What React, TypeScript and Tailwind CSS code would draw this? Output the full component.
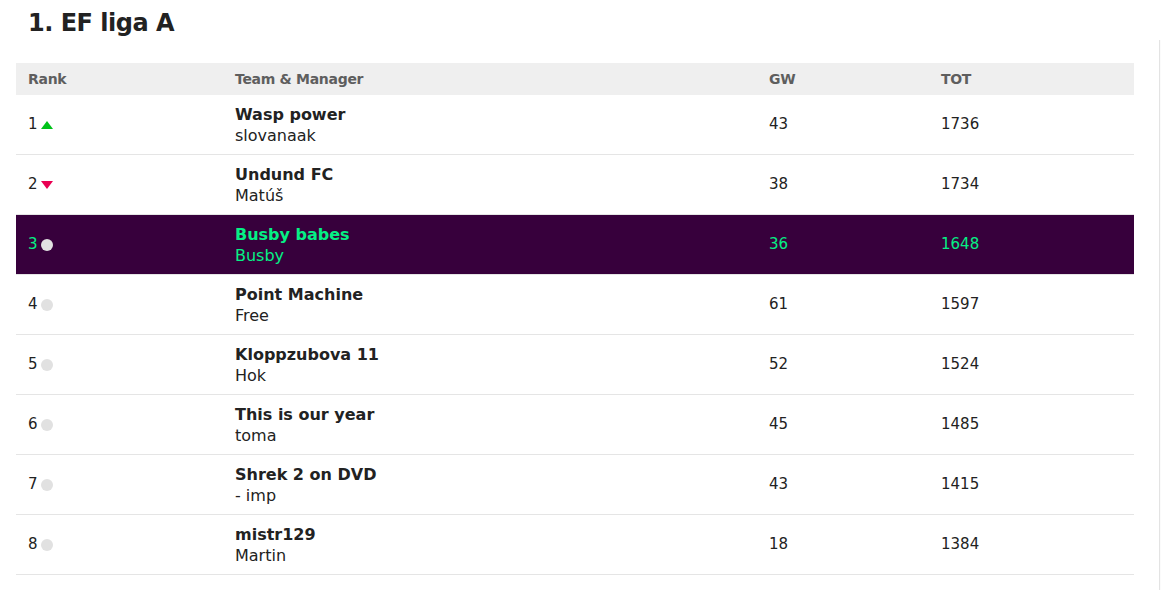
const rows = [
  { rank: 1, move: "up", team: "Wasp power", manager: "slovanaak", gw: 43, tot: 1736 },
  { rank: 2, move: "down", team: "Undund FC", manager: "Matúš", gw: 38, tot: 1734 },
  { rank: 3, move: "same", team: "Busby babes", manager: "Busby", gw: 36, tot: 1648, mine: true },
  { rank: 4, move: "same", team: "Point Machine", manager: "Free", gw: 61, tot: 1597 },
  { rank: 5, move: "same", team: "Kloppzubova 11", manager: "Hok", gw: 52, tot: 1524 },
  { rank: 6, move: "same", team: "This is our year", manager: "toma", gw: 45, tot: 1485 },
  { rank: 7, move: "same", team: "Shrek 2 on DVD", manager: "- imp", gw: 43, tot: 1415 },
  { rank: 8, move: "same", team: "mistr129", manager: "Martin", gw: 18, tot: 1384 },
]

function Movement({ move }: { move: string }) {
  if (move === "up")
    return (
      <svg width="12" height="8" viewBox="0 0 12 8" className="ml-[3px]">
        <path d="M6 0 L12 8 L0 8 Z" fill="#00c21a" />
      </svg>
    )
  if (move === "down")
    return (
      <svg width="12" height="8" viewBox="0 0 12 8" className="ml-[3px]">
        <path d="M0 0 L12 0 L6 8 Z" fill="#e90052" />
      </svg>
    )
  return <span className="ml-[3px] inline-block h-3 w-3 rounded-full bg-[#e1e1e1]" />
}

export default function App() {
  return (
    <div className="flex min-h-[590px] bg-white font-['DejaVu_Sans',sans-serif] text-[#222]">
      <div className="w-[1159px] shrink-0">
        <h1 className="ml-7 mt-[4px] text-[24px] font-bold leading-[38px] tracking-[-0.5px] text-[#222]">1. EF liga A</h1>
        <div className="ml-4 mt-[21px] w-[1118px]">
          <div className="grid h-8 grid-cols-[207px_534px_172px_1fr] items-center bg-[#efefef] pt-[1px] text-[14px] font-bold tracking-[-0.3px] text-[#5e5e5e]">
            <div className="pl-3">Rank</div>
            <div className="pl-3">Team &amp; Manager</div>
            <div className="pl-3">GW</div>
            <div className="pl-3">TOT</div>
          </div>
          {rows.map((r) => (
            <div
              key={r.rank}
              className={
                r.mine
                  ? "grid h-[60px] grid-cols-[207px_534px_172px_1fr] items-center border-b border-[#e5e5e5] bg-[#37003c] text-[#05f085]"
                  : "grid h-[60px] grid-cols-[207px_534px_172px_1fr] items-center border-b border-[#e5e5e5] text-[#222]"
              }
            >
              <div className="flex items-center pl-3 text-[15px]">
                {r.rank}
                <Movement move={r.move} />
              </div>
              <div className="pl-3 pt-[1px]">
                <div className="text-[16px] font-bold leading-[21px]">{r.team}</div>
                <div className="text-[16px] leading-[21px]">{r.manager}</div>
              </div>
              <div className="pl-3 text-[15px]">{r.gw}</div>
              <div className="pl-3 text-[15px]">{r.tot}</div>
            </div>
          ))}
        </div>
      </div>
      <div className="mt-10 flex-1 border-l border-[#e3e3e3] bg-[#fbfbfb]" />
    </div>
  )
}
